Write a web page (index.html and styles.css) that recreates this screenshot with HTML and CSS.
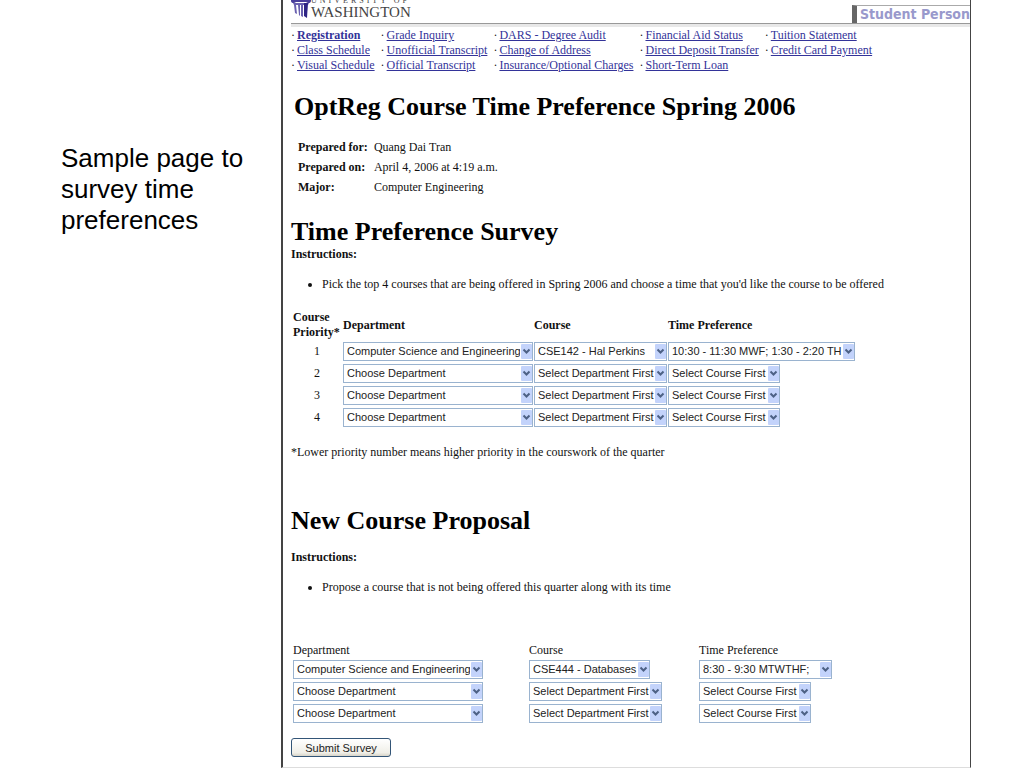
FILE: index.html
```html
<!DOCTYPE html>
<html lang="en">
<head>
    <meta charset="UTF-8">
    <meta name="viewport" content="width=device-width, initial-scale=1.0">
    <title>OptReg Course Time Preference</title>
    <link rel="stylesheet" href="styles.css">
</head>
<body>
    <aside class="caption">
        <p>Sample page to survey time preferences</p>
    </aside>

    <main class="page">
        <header class="masthead">
            <div class="logo">
                <svg class="logo-mark" width="20" height="19" viewBox="0 0 20 19" aria-hidden="true">
                    <path d="M0 0h20v1c0 2-3 3-5 1H5C3 4 0 3 0 1z" fill="#4a3f9c"/>
                    <path d="M2 3h16l-1 2H3z" fill="#6a61b0"/>
                    <path d="M3 5h2l1 9-2-1zM7 5h2v11l-1-1zM10 5h2v12l-2-1z" fill="#6a61b0"/>
                    <path d="M13 3h4l-1 15-3-2z" fill="#2f2585"/>
                </svg>
                <div class="logo-text">
                    <span class="logo-small">UNIVERSITY OF</span>
                    <span class="logo-big">WASHINGTON</span>
                </div>
            </div>
            <div class="section-tab">Student Person</div>
        </header>

        <nav class="links">
            <ul>
                <li><a href="#" class="current">Registration</a></li>
                <li><a href="#">Class Schedule</a></li>
                <li><a href="#">Visual Schedule</a></li>
            </ul>
            <ul>
                <li><a href="#">Grade Inquiry</a></li>
                <li><a href="#">Unofficial Transcript</a></li>
                <li><a href="#">Official Transcript</a></li>
            </ul>
            <ul>
                <li><a href="#">DARS - Degree Audit</a></li>
                <li><a href="#">Change of Address</a></li>
                <li><a href="#">Insurance/Optional Charges</a></li>
            </ul>
            <ul>
                <li><a href="#">Financial Aid Status</a></li>
                <li><a href="#">Direct Deposit Transfer</a></li>
                <li><a href="#">Short-Term Loan</a></li>
            </ul>
            <ul>
                <li><a href="#">Tuition Statement</a></li>
                <li><a href="#">Credit Card Payment</a></li>
            </ul>
        </nav>

        <form class="content">
            <h1>OptReg Course Time Preference Spring 2006</h1>

            <table class="info">
                <tr><th scope="row">Prepared for:</th><td>Quang Dai Tran</td></tr>
                <tr><th scope="row">Prepared on:</th><td>April 4, 2006 at 4:19 a.m.</td></tr>
                <tr><th scope="row">Major:</th><td>Computer Engineering</td></tr>
            </table>

            <section class="survey">
                <h2>Time Preference Survey</h2>
                <p class="label">Instructions:</p>
                <ul class="notes">
                    <li>Pick the top 4 courses that are being offered in Spring 2006 and choose a time that you'd like the course to be offered</li>
                </ul>

                <table class="choices">
                    <thead>
                        <tr>
                            <th scope="col" class="priority">Course Priority*</th>
                            <th scope="col">Department</th>
                            <th scope="col">Course</th>
                            <th scope="col">Time Preference</th>
                        </tr>
                    </thead>
                    <tbody>
                        <tr>
                            <td class="priority">1</td>
                            <td><select class="dept" aria-label="Department 1"><option>Computer Science and Engineering</option></select></td>
                            <td><select class="course" aria-label="Course 1"><option>CSE142 - Hal Perkins</option></select></td>
                            <td><select class="time-long" aria-label="Time preference 1"><option>10:30 - 11:30 MWF; 1:30 - 2:20 TH</option></select></td>
                        </tr>
                        <tr>
                            <td class="priority">2</td>
                            <td><select class="dept" aria-label="Department 2"><option>Choose Department</option></select></td>
                            <td><select class="course" aria-label="Course 2"><option>Select Department First</option></select></td>
                            <td><select class="time" aria-label="Time preference 2"><option>Select Course First</option></select></td>
                        </tr>
                        <tr>
                            <td class="priority">3</td>
                            <td><select class="dept" aria-label="Department 3"><option>Choose Department</option></select></td>
                            <td><select class="course" aria-label="Course 3"><option>Select Department First</option></select></td>
                            <td><select class="time" aria-label="Time preference 3"><option>Select Course First</option></select></td>
                        </tr>
                        <tr>
                            <td class="priority">4</td>
                            <td><select class="dept" aria-label="Department 4"><option>Choose Department</option></select></td>
                            <td><select class="course" aria-label="Course 4"><option>Select Department First</option></select></td>
                            <td><select class="time" aria-label="Time preference 4"><option>Select Course First</option></select></td>
                        </tr>
                    </tbody>
                </table>
                <p>*Lower priority number means higher priority in the courswork of the quarter</p>
            </section>

            <section class="proposal">
                <h2>New Course Proposal</h2>
                <p class="label">Instructions:</p>
                <ul class="notes">
                    <li>Propose a course that is not being offered this quarter along with its time</li>
                </ul>

                <table class="choices">
                    <thead>
                        <tr>
                            <th scope="col">Department</th>
                            <th scope="col">Course</th>
                            <th scope="col">Time Preference</th>
                        </tr>
                    </thead>
                    <tbody>
                        <tr>
                            <td><select class="dept" aria-label="Proposed department 1"><option>Computer Science and Engineering</option></select></td>
                            <td><select class="course-short" aria-label="Proposed course 1"><option>CSE444 - Databases</option></select></td>
                            <td><select class="course" aria-label="Proposed time 1"><option>8:30 - 9:30 MTWTHF;</option></select></td>
                        </tr>
                        <tr>
                            <td><select class="dept" aria-label="Proposed department 2"><option>Choose Department</option></select></td>
                            <td><select class="course" aria-label="Proposed course 2"><option>Select Department First</option></select></td>
                            <td><select class="time" aria-label="Proposed time 2"><option>Select Course First</option></select></td>
                        </tr>
                        <tr>
                            <td><select class="dept" aria-label="Proposed department 3"><option>Choose Department</option></select></td>
                            <td><select class="course" aria-label="Proposed course 3"><option>Select Department First</option></select></td>
                            <td><select class="time" aria-label="Proposed time 3"><option>Select Course First</option></select></td>
                        </tr>
                    </tbody>
                </table>
                <button type="button" class="submit">Submit Survey</button>
            </section>
        </form>
    </main>
</body>
</html>
```
FILE: styles.css
```css
* {
    margin: 0;
    padding: 0;
    box-sizing: border-box;
}

body {
    display: flex;
    min-height: 100vh;
    padding-right: 53px;
    background-color: #fff;
    color: #111;
    font-family: "Liberation Serif", "Times New Roman", serif;
    font-size: 12px;
    line-height: 15px;
}

.caption {
    flex: 0 0 281px;
    padding: 143px 32px 0 61px;
    color: #000;
    font-family: "Liberation Sans", Arial, sans-serif;
    font-size: 26px;
    line-height: 31px;
}

.page {
    flex: 1;
    min-width: 0;
    border-left: 2px solid #444;
    border-right: 1px solid #444;
    border-bottom: 1px solid #ddd;
}

/* header */
.masthead {
    display: flex;
    justify-content: space-between;
    align-items: flex-end;
    height: 24px;
    margin-left: 8px;
    border-bottom: 1px solid #999;
    box-shadow: 0 3px 0 #e8e8e8;
}

.logo {
    display: flex;
    align-items: flex-end;
    height: 23px;
    padding-bottom: 4px;
}

.logo-text {
    display: flex;
    flex-direction: column;
    color: #444;
}

.logo-small {
    font-size: 8px;
    line-height: 8px;
    letter-spacing: 3px;
}

.logo-big {
    font-size: 15px;
    line-height: 14px;
}

.section-tab {
    padding-left: 3px;
    border-top: 1px solid #aaa;
    border-left: 5px solid #666;
    color: #9999cc;
    font-family: "DejaVu Sans Condensed", Tahoma, sans-serif;
    font-size: 14px;
    font-weight: bold;
    line-height: 17px;
    white-space: nowrap;
}

.links {
    display: flex;
    gap: 6px;
    padding: 4px 8px 0;
}

.links ul {
    list-style: none;
    white-space: nowrap;
}

.links li::before {
    content: "·";
    padding-right: 2px;
}

.links a {
    color: #333399;
}

.links .current {
    font-weight: bold;
}

/* form */
.content {
    padding: 19px 8px 8px;
}

h1,
h2 {
    color: #000;
    font-size: 26px;
    line-height: 30px;
}

h1 {
    padding-left: 3px;
}

.info {
    margin: 15px 0 20px 7px;
    border-collapse: collapse;
}

.info th {
    padding-right: 6px;
    text-align: left;
}

.info td,
.info th {
    height: 20px;
}

.label {
    font-weight: bold;
}

.notes {
    margin: 15px 0;
    padding-left: 31px;
}

.choices {
    border-collapse: collapse;
}

.choices th {
    text-align: left;
}

.choices td {
    height: 22px;
    padding-right: 1px;
    vertical-align: middle;
}

.choices .priority {
    width: 52px;
    padding: 0 2px;
    text-align: center;
}

.choices th.priority {
    text-align: left;
}

.survey .choices {
    margin: 18px 0 17px;
}

.proposal {
    margin-top: 46px;
}

.proposal .label {
    margin-top: 14px;
}

.proposal .choices {
    margin: 48px 0 14px 2px;
}

.proposal th {
    font-weight: normal;
}

.proposal td:first-child {
    width: 236px;
}

.proposal td:nth-child(2) {
    width: 170px;
}

select {
    display: block;
    height: 19px;
    padding: 0 12px 0 3px;
    border: 1px solid #9ab3cf;
    border-radius: 0;
    appearance: none;
    background: #fff url("data:image/svg+xml,%3Csvg xmlns='http://www.w3.org/2000/svg' width='12' height='17'%3E%3Crect x='1' y='1' width='11' height='15' rx='1' fill='%23c3d3fb'/%3E%3Cpath d='M3.5 6.5l3 3 3-3' fill='none' stroke='%234d6185' stroke-width='2'/%3E%3C/svg%3E") no-repeat right center;
    color: #222;
    font-family: "Liberation Sans", Arial, sans-serif;
    font-size: 11px;
}

.dept {
    width: 190px;
}

.course {
    width: 133px;
}

.course-short {
    width: 121px;
}

.time {
    width: 112px;
}

.time-long {
    width: 187px;
}

.submit {
    display: block;
    width: 100px;
    height: 19px;
    border: 1px solid #335577;
    border-radius: 3px;
    background: linear-gradient(#fff, #f0efe8 80%, #d8d4c8);
    color: #222;
    font-family: "Liberation Sans", Arial, sans-serif;
    font-size: 11px;
}
```
